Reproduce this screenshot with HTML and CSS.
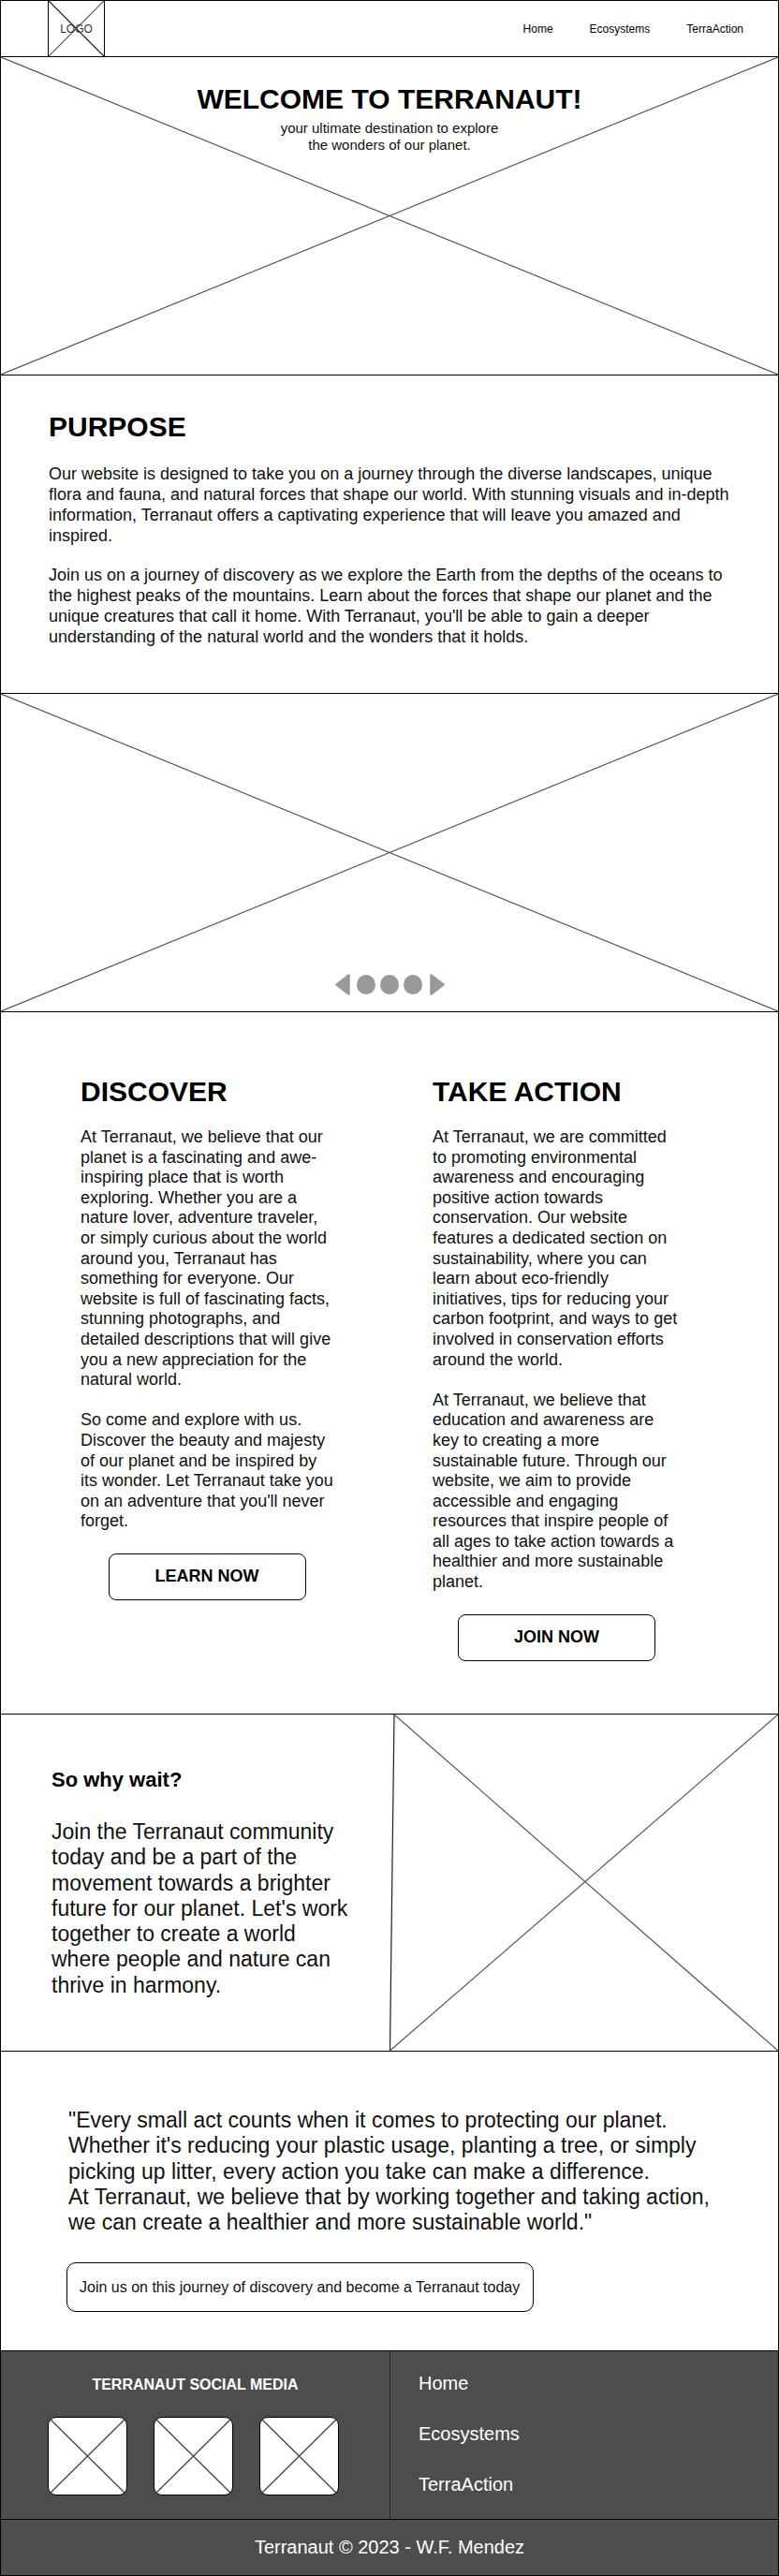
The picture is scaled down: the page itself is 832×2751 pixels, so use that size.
FILE: index.html
```html
<!DOCTYPE html>
<html lang="en">
<head>
<meta charset="utf-8">
<title>Terranaut</title>
<link rel="stylesheet" href="styles.css">
</head>
<body>
<div class="page">
  <header class="header">
    <div class="logo ph">
      <svg class="ph-x" viewBox="0 0 100 100" preserveAspectRatio="none"><line class="dark" x1="0" y1="0" x2="100" y2="100"/><line x1="0" y1="100" x2="100" y2="0"/></svg>
      <span class="logo-text">LOGO</span>
    </div>
    <nav class="nav">
      <a href="#">Home</a>
      <a href="#">Ecosystems</a>
      <a href="#">TerraAction</a>
    </nav>
  </header>

  <section class="hero ph">
    <svg class="ph-x" viewBox="0 0 100 100" preserveAspectRatio="none"><line x1="0" y1="0" x2="100" y2="100"/><line x1="0" y1="100" x2="100" y2="0"/></svg>
    <h1 class="hero-title">WELCOME TO TERRANAUT!</h1>
    <p class="hero-sub">your ultimate destination to explore<br>the wonders of our planet.</p>
  </section>

  <section class="purpose">
    <h2 class="heading">PURPOSE</h2>
    <p class="purpose-text">Our website is designed to take you on a journey through the diverse landscapes, unique flora and fauna, and natural forces that shape our world. With stunning visuals and in-depth information, Terranaut offers a captivating experience that will leave you amazed and inspired.</p>
    <p class="purpose-text">Join us on a journey of discovery as we explore the Earth from the depths of the oceans to the highest peaks of the mountains. Learn about the forces that shape our planet and the unique creatures that call it home. With Terranaut, you'll be able to gain a deeper understanding of the natural world and the wonders that it holds.</p>
  </section>

  <section class="slider ph">
    <svg class="ph-x" viewBox="0 0 100 100" preserveAspectRatio="none"><line x1="0" y1="0" x2="100" y2="100"/><line x1="0" y1="100" x2="100" y2="0"/></svg>
    <div class="slider-controls">
      <svg class="arrow" width="16" height="23" viewBox="0 0 16 23"><path d="M14.5 1.5 V21.5 L1.5 11.5 Z"/></svg>
      <span class="dot"></span>
      <span class="dot"></span>
      <span class="dot"></span>
      <svg class="arrow" width="16" height="23" viewBox="0 0 16 23"><path d="M1.5 1.5 V21.5 L14.5 11.5 Z"/></svg>
    </div>
  </section>

  <section class="columns">
    <div class="col">
      <h2 class="heading">DISCOVER</h2>
      <p class="col-text">At Terranaut, we believe that our planet is a fascinating and awe-inspiring place that is worth exploring. Whether you are a nature lover, adventure traveler, or simply curious about the world around you, Terranaut has something for everyone. Our website is full of fascinating facts, stunning photographs, and detailed descriptions that will give you a new appreciation for the natural world.</p>
      <p class="col-text">So come and explore with us. Discover the beauty and majesty of our planet and be inspired by its wonder. Let Terranaut take you on an adventure that you'll never forget.</p>
      <a class="btn" href="#">LEARN NOW</a>
    </div>
    <div class="col">
      <h2 class="heading">TAKE ACTION</h2>
      <p class="col-text">At Terranaut, we are committed to promoting environmental awareness and encouraging positive action towards conservation. Our website features a dedicated section on sustainability, where you can learn about eco-friendly initiatives, tips for reducing your carbon footprint, and ways to get involved in conservation efforts around the world.</p>
      <p class="col-text">At Terranaut, we believe that education and awareness are key to creating a more sustainable future. Through our website, we aim to provide accessible and engaging resources that inspire people of all ages to take action towards a healthier and more sustainable planet.</p>
      <a class="btn" href="#">JOIN NOW</a>
    </div>
  </section>

  <section class="wait">
    <div class="wait-text">
      <h3 class="wait-title">So why wait?</h3>
      <p class="wait-body">Join the Terranaut community today and be a part of the movement towards a brighter future for our planet. Let's work together to create a world where people and nature can thrive in harmony.</p>
    </div>
    <svg class="wait-img" viewBox="0 0 415 359" preserveAspectRatio="none">
      <line class="edge" x1="5" y1="0" x2="0.5" y2="359"/>
      <line x1="5" y1="0" x2="415" y2="359"/>
      <line x1="0.5" y1="359" x2="415" y2="0"/>
    </svg>
  </section>

  <section class="quote">
    <p class="quote-text">"Every small act counts when it comes to protecting our planet. Whether it's reducing your plastic usage, planting a tree, or simply picking up litter, every action you take can make a difference.<br>At Terranaut, we believe that by working together and taking action, we can create a healthier and more sustainable world."</p>
    <a class="cta" href="#">Join us on this journey of discovery and become a Terranaut today</a>
  </section>

  <footer class="footer">
    <div class="footer-main">
      <div class="social">
        <h4 class="social-title">TERRANAUT SOCIAL MEDIA</h4>
        <div class="social-icons">
          <span class="icon"><svg class="icon-x" viewBox="0 0 100 100" preserveAspectRatio="none"><line x1="0" y1="0" x2="100" y2="100"/><line x1="0" y1="100" x2="100" y2="0"/></svg></span>
          <span class="icon"><svg class="icon-x" viewBox="0 0 100 100" preserveAspectRatio="none"><line x1="0" y1="0" x2="100" y2="100"/><line x1="0" y1="100" x2="100" y2="0"/></svg></span>
          <span class="icon"><svg class="icon-x" viewBox="0 0 100 100" preserveAspectRatio="none"><line x1="0" y1="0" x2="100" y2="100"/><line x1="0" y1="100" x2="100" y2="0"/></svg></span>
        </div>
      </div>
      <nav class="footer-links">
        <a href="#">Home</a>
        <a href="#">Ecosystems</a>
        <a href="#">TerraAction</a>
      </nav>
    </div>
    <div class="footer-bottom">Terranaut © 2023 - W.F. Mendez</div>
  </footer>
</div>
</body>
</html>
```

FILE: styles.css
```css
* {
  box-sizing: border-box;
}

body {
  margin: 0;
  background: #fff;
  color: #000;
  font-family: "Liberation Sans", Arial, Helvetica, sans-serif;
}

a {
  color: inherit;
  text-decoration: none;
}

.page {
  width: 832px;
  border: 1px solid #000;
}

/* placeholder boxes */
.ph {
  position: relative;
}

.ph-x {
  position: absolute;
  inset: 0;
  width: 100%;
  height: 100%;
  pointer-events: none;
}

.ph-x line {
  stroke: #555;
  stroke-width: 1.2;
  vector-effect: non-scaling-stroke;
}

.ph-x line.dark {
  stroke: #111;
}

/* header */
.header {
  height: 60px;
  border-bottom: 1px solid #000;
  display: flex;
  justify-content: space-between;
  align-items: stretch;
  padding: 0 37px 0 50px;
}

.logo {
  width: 61px;
  border-left: 1px solid #000;
  border-right: 1px solid #000;
  display: flex;
  align-items: center;
  justify-content: center;
}

.logo-text {
  position: relative;
  font-size: 12px;
  color: #333;
}

.nav {
  display: flex;
  align-items: center;
  gap: 39px;
  font-size: 12px;
}

/* hero */
.hero {
  height: 340px;
  border-bottom: 1px solid #000;
  padding-top: 28px;
  text-align: center;
}

.hero-title {
  position: relative;
  margin: 0;
  font-size: 30px;
  line-height: 34px;
  font-weight: bold;
}

.hero-sub {
  position: relative;
  margin: 5px 0 0;
  font-size: 15px;
  line-height: 18px;
  color: #111;
}

/* purpose */
.heading {
  margin: 0;
  font-size: 30px;
  line-height: 34px;
  font-weight: bold;
}

.purpose {
  height: 340px;
  border-bottom: 1px solid #000;
  padding: 38px 0 0 51px;
}

.purpose-text {
  width: 740px;
  margin: 22px 0 0;
  font-size: 18px;
  line-height: 22px;
  color: #111;
}

.purpose-text + .purpose-text {
  margin-top: 20px;
}

/* slider */
.slider {
  height: 340px;
  border-bottom: 1px solid #000;
  display: flex;
  justify-content: center;
  align-items: flex-end;
  padding-bottom: 17px;
}

.slider-controls {
  position: relative;
  display: flex;
  align-items: center;
  gap: 5px;
}

.arrow {
  display: block;
}

.arrow path {
  fill: #999;
  stroke: #999;
  stroke-width: 2.5;
  stroke-linejoin: round;
}

.arrow:first-child {
  margin-right: 2px;
}

.arrow:last-child {
  margin-left: 3px;
}

.dot {
  width: 20px;
  height: 21px;
  border-radius: 50%;
  background: #999;
}

/* two columns */
.columns {
  height: 750px;
  border-bottom: 1px solid #000;
  display: grid;
  grid-template-columns: 270px 265px;
  column-gap: 106px;
  align-items: start;
  padding: 68px 0 0 85px;
}

.col-text {
  margin: 21px 0 0;
  font-size: 18px;
  line-height: 21.6px;
  color: #111;
}

.col-text + .col-text {
  margin-top: 21.6px;
}

.btn {
  display: flex;
  align-items: center;
  justify-content: center;
  width: 211px;
  height: 50px;
  margin: 23px auto 0;
  border: 1px solid #000;
  border-radius: 8px;
  font-size: 18px;
  font-weight: bold;
}

/* why wait */
.wait {
  height: 360px;
  border-bottom: 1px solid #000;
  display: grid;
  grid-template-columns: 415px 1fr;
}

.wait-text {
  padding: 57px 0 0 54px;
}

.wait-title {
  margin: 0;
  font-size: 22px;
  line-height: 25px;
  font-weight: bold;
}

.wait-body {
  width: 325px;
  margin: 30px 0 0;
  font-size: 23px;
  line-height: 27.3px;
  color: #111;
}

.wait-img {
  display: block;
  width: 100%;
  height: 100%;
}

.wait-img line {
  stroke: #555;
  stroke-width: 1.2;
  vector-effect: non-scaling-stroke;
}

.wait-img line.edge {
  stroke: #222;
}

/* quote */
.quote {
  height: 320px;
  border-bottom: 1px solid #000;
  padding: 60px 0 0 70px;
}

.quote-text {
  width: 700px;
  margin: 0 0 0 2px;
  font-size: 23px;
  line-height: 27.3px;
  color: #111;
}

.cta {
  display: inline-flex;
  align-items: center;
  height: 53px;
  margin-top: 29px;
  padding: 0 14px 0 13px;
  border: 1px solid #000;
  border-radius: 10px;
  font-size: 16px;
  color: #111;
}

/* footer */
.footer {
  background: #4d4d4d;
  color: #fff;
}

.footer-main {
  height: 180px;
  border-bottom: 1px solid #000;
  display: grid;
  grid-template-columns: 416px 1fr;
}

.social {
  border-right: 1px solid #222;
  padding-top: 27px;
}

.social-title {
  margin: 0;
  text-align: center;
  font-size: 16px;
  line-height: 18px;
  font-weight: bold;
}

.social-icons {
  display: flex;
  gap: 28px;
  margin-top: 25px;
  padding-left: 50px;
}

.icon {
  position: relative;
  width: 85px;
  height: 84px;
  background: #fff;
  border: 1px solid #000;
  border-radius: 9px;
}

.icon-x {
  position: absolute;
  top: -2px;
  left: -2px;
  width: calc(100% + 4px);
  height: calc(100% + 4px);
  overflow: visible;
}

.icon-x line {
  stroke: #444;
  stroke-width: 1.3;
  vector-effect: non-scaling-stroke;
}

.footer-links {
  display: flex;
  flex-direction: column;
  align-items: flex-start;
  gap: 31px;
  padding: 23px 0 0 30px;
  font-size: 20px;
  line-height: 23px;
}

.footer-bottom {
  height: 59px;
  display: flex;
  align-items: center;
  justify-content: center;
  font-size: 20px;
}
```
